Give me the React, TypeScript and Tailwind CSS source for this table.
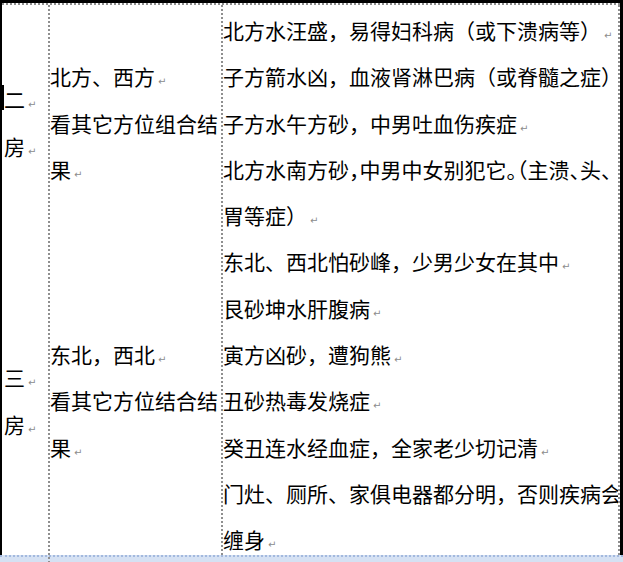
const cjk = "font-['Noto_Sans_CJK_SC','Noto_Sans_CJK_JP',sans-serif]";

function Mark() {
  return (
    <span className="ml-[3px] font-['DejaVu_Sans',sans-serif] text-[10px] text-[#8c8c8c]">
      ↵
    </span>
  );
}

function Half({ ch }: { ch: string }) {
  return <span className="[font-feature-settings:'halt']">{ch}</span>;
}

function Line({ children }: { children?: React.ReactNode }) {
  return (
    <div className="h-[46.3px] leading-[46.3px] whitespace-nowrap">
      {children}
    </div>
  );
}

function Gap({ lines }: { lines: number }) {
  return <div style={{ height: lines * 46.3 }} />;
}

const notes: { text: string; mark: boolean }[] = [
  { text: "北方水汪盛，易得妇科病（或下溃病等）", mark: true },
  { text: "子方箭水凶，血液肾淋巴病（或脊髓之症）", mark: true },
  { text: "子方水午方砂，中男吐血伤疾症", mark: true },
];

const notes2: { text: string; mark: boolean }[] = [
  { text: "胃等症）", mark: true },
  { text: "东北、西北怕砂峰，少男少女在其中", mark: true },
  { text: "艮砂坤水肝腹病", mark: true },
  { text: "寅方凶砂，遭狗熊", mark: true },
  { text: "丑砂热毒发烧症", mark: true },
  { text: "癸丑连水经血症，全家老少切记清", mark: true },
  { text: "门灶、厕所、家俱电器都分明，否则疾病会", mark: false },
  { text: "缠身", mark: true },
];

export default function App() {
  return (
    <div className={`flex h-[562px] w-[623px] flex-col overflow-hidden bg-white text-[21px] text-black ${cjk}`}>
      <div className="flex h-[555px] flex-col border-t-[3px] border-r-[3px] border-l-2 border-black">
        <div className="flex flex-1 border-t-2 border-dotted border-[#8f8f8f]">
          {/* 房 */}
          <div className="relative w-[48px] border-r-2 border-dotted border-[#8f8f8f] pt-[2px] pl-[2px]">
            <span className="absolute top-[80px] left-0 h-[25px] w-[2px] bg-black" />
            <Gap lines={1.5} />
            <Line>
              二<Mark />
            </Line>
            <Line>
              房<Mark />
            </Line>
            <Gap lines={4} />
            <Line>
              三<Mark />
            </Line>
            <Line>
              房<Mark />
            </Line>
          </div>

          {/* 方位 */}
          <div className="w-[173px] border-r-2 border-dotted border-[#8f8f8f] pt-[2px]">
            <Gap lines={1} />
            <Line>
              北方、西方<Mark />
            </Line>
            <Line>看其它方位组合结</Line>
            <Line>
              果<Mark />
            </Line>
            <Gap lines={3} />
            <Line>
              东北，西北<Mark />
            </Line>
            <Line>看其它方位结合结</Line>
            <Line>
              果<Mark />
            </Line>
          </div>

          {/* 说明 */}
          <div className="min-w-0 flex-1 overflow-hidden border-r-2 border-dotted border-[#8f8f8f] pt-[2px]">
            {notes.map((n) => (
              <Line key={n.text}>
                {n.text}
                {n.mark && <Mark />}
              </Line>
            ))}
            <Line>
              北方水南方砂<Half ch="，" />中男中女别犯它<Half ch="。" />
              <Half ch="（" />主溃<Half ch="、" />头<Half ch="、" />
            </Line>
            {notes2.map((n) => (
              <Line key={n.text}>
                {n.text}
                {n.mark && <Mark />}
              </Line>
            ))}
          </div>
        </div>
      </div>
      <div className="h-[7px] border-t-2 border-dotted border-[#a3b9de] bg-[#d5e1f3]" />
    </div>
  );
}
